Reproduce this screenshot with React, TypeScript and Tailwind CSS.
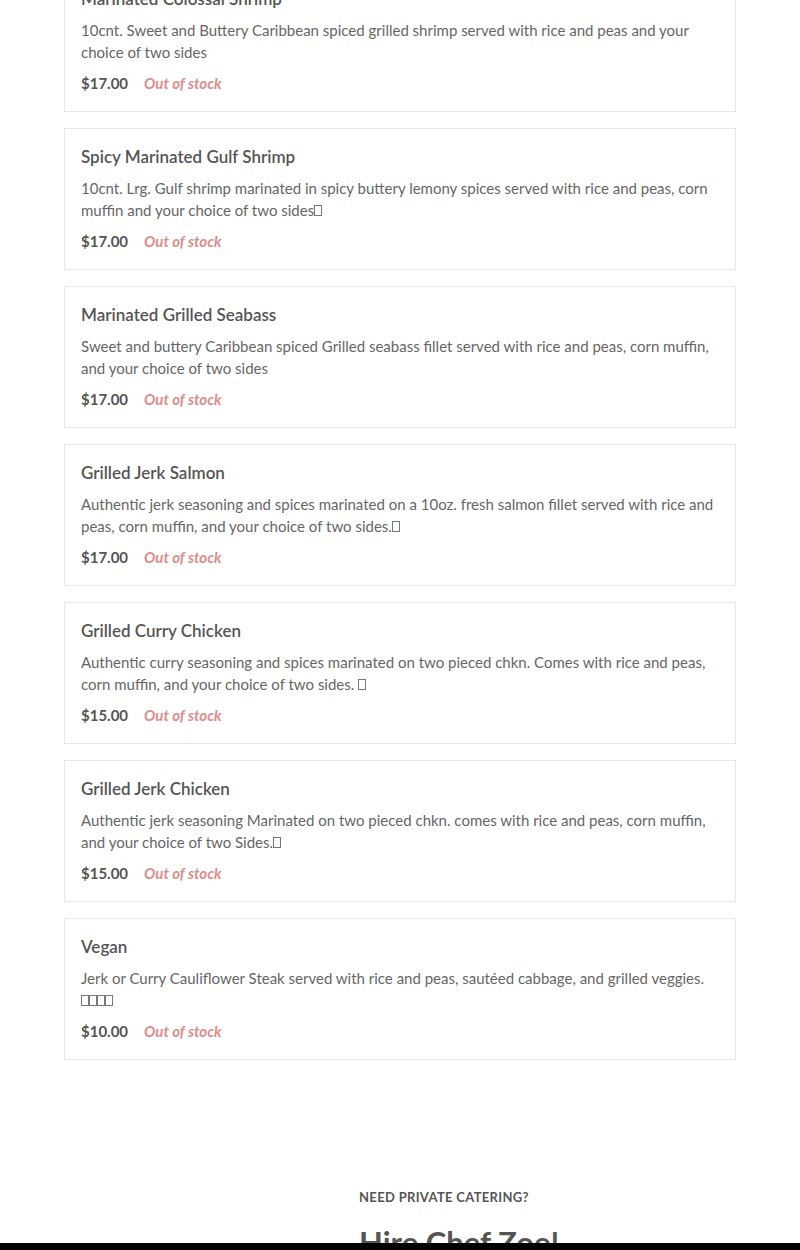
import React from "react";

type Item = { name: string; desc: string; price: string; tofu?: number; tofuBreak?: boolean };

const items: Item[] = [
  {
    name: "Marinated Colossal Shrimp",
    desc: "10cnt. Sweet and Buttery Caribbean spiced grilled shrimp served with rice and peas and your choice of two sides",
    price: "$17.00",
  },
  {
    name: "Spicy Marinated Gulf Shrimp",
    desc: "10cnt. Lrg. Gulf shrimp marinated in spicy buttery lemony spices served with rice and peas, corn muffin and your choice of two sides",
    price: "$17.00",
    tofu: 1,
  },
  {
    name: "Marinated Grilled Seabass",
    desc: "Sweet and buttery Caribbean spiced Grilled seabass fillet served with rice and peas, corn muffin, and your choice of two sides",
    price: "$17.00",
  },
  {
    name: "Grilled Jerk Salmon",
    desc: "Authentic jerk seasoning and spices marinated on a 10oz. fresh salmon fillet served with rice and peas, corn muffin, and your choice of two sides.",
    price: "$17.00",
    tofu: 1,
  },
  {
    name: "Grilled Curry Chicken",
    desc: "Authentic curry seasoning and spices marinated on two pieced chkn. Comes with rice and peas, corn muffin, and your choice of two sides. ",
    price: "$15.00",
    tofu: 1,
  },
  {
    name: "Grilled Jerk Chicken",
    desc: "Authentic jerk seasoning Marinated on two pieced chkn. comes with rice and peas, corn muffin, and your choice of two Sides.",
    price: "$15.00",
    tofu: 1,
  },
  {
    name: "Vegan",
    desc: "Jerk or Curry Cauliflower Steak served with rice and peas, sautéed cabbage, and grilled veggies.",
    price: "$10.00",
    tofu: 4,
    tofuBreak: true,
  },
];

// missing-glyph boxes, as the emoji show in the shot
function Tofu({ n }: { n: number }) {
  return (
    <span className="inline-flex">
      {Array.from({ length: n }).map((_, i) => (
        <span key={i} className="inline-block w-[8px] h-[11px] border border-[#777] align-[-1px]" />
      ))}
    </span>
  );
}

function MenuCard({ item }: { item: Item }) {
  return (
    <div className="border border-[#e6e6e6] bg-white px-4 py-4">
      <h3 className="text-[17px] leading-6 font-semibold text-[#555]">{item.name}</h3>
      <p className="mt-2 text-[15px] leading-[22px] text-[#666]">
        {item.desc}
        {item.tofu ? (item.tofuBreak ? <><br /><Tofu n={item.tofu} /></> : <Tofu n={item.tofu} />) : null}
      </p>
      <div className="mt-2 flex items-center gap-4 leading-6">
        <span className="text-[15px] font-bold text-[#555]">{item.price}</span>
        <span className="text-[15px] italic font-bold text-[#dd8c8c]">Out of stock</span>
      </div>
    </div>
  );
}

export default function App() {
  return (
    <div
      className="min-h-[1250px] bg-white overflow-hidden"
      style={{ fontFamily: "Lato, 'Open Sans', sans-serif" }}
    >
      <div className="mx-16 -mt-[30px] flex flex-col gap-4">
        {items.map((it) => (
          <MenuCard key={it.name} item={it} />
        ))}
      </div>

      <div className="mt-[128px] pl-[359px]">
        <p className="text-[13px] font-bold tracking-wide uppercase text-[#555]">Need private catering?</p>
        <h2 className="mt-4 text-[31px] leading-9 font-bold text-[#555]">Hire Chef Zoe!</h2>
      </div>

      <div className="fixed bottom-0 left-0 right-0 h-[7px] bg-black" />
    </div>
  );
}
